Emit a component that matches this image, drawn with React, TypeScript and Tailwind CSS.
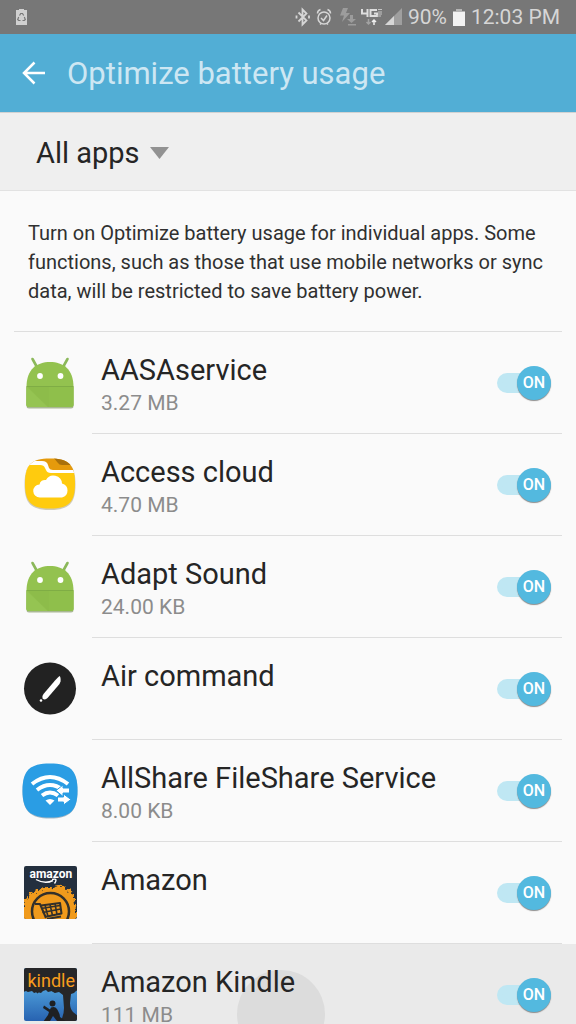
import React, { useState } from 'react'

interface AppEntry {
  id: string
  name: string
  size?: string
  icon: React.ReactNode
  pressed?: boolean
}

function AndroidIcon() {
  return (
    <svg viewBox="0 0 56 56" className="w-14 h-14" aria-hidden="true">
      <path d="M4.500 32h47v19q0 2.500-2.500 2.500H7q-2.500 0-2.500-2.500z" fill="#a9b894" />
      <path d="M10.500 4l5 9M45.500 4l-5 9" stroke="#8bb85a" strokeWidth="2.600" strokeLinecap="round" />
      <path d="M4.500 32C4.500 14 15 7 28 7S51.500 14 51.500 32v17.500q0 2.500-2.500 2.500H7q-2.500 0-2.500-2.500z" fill="#93c24f" />
      <path d="M4.500 32h47v17.500q0 2.500-2.500 2.500H7q-2.500 0-2.500-2.500z" fill="#8fbf4b" />
      <path d="M5 32h1l20 20H7q-2.500 0-2.500-2.500z" fill="#95c452" />
      <path d="M5 32h22v20h-1z" fill="#8bba49" opacity=".5" />
      <path d="M4.500 31.500h47" stroke="#7fad45" strokeWidth="1" />
      <circle cx="18" cy="21" r="2.900" fill="#fff" />
      <circle cx="38.500" cy="21" r="2.900" fill="#fff" />
    </svg>
  )
}

function CloudIcon() {
  return (
    <svg viewBox="0 0 56 56" className="w-14 h-14" aria-hidden="true">
      <defs>
        <clipPath id="folderShape">
          <path d="M28 1.500C47 1.500 53 8 53 26.500S47 51.500 28 51.500 3 45 3 26.500 9 1.500 28 1.500z" />
        </clipPath>
      </defs>
      <path d="M28 2C47.500 2 53.500 9 53.500 27.500S47.500 53 28 53 2.500 46 2.500 27.500 8.500 2 28 2z" fill="#cfcab8" />
      <g clipPath="url(#folderShape)">
        <path d="M0 0h56v16H0z" fill="#e59a0c" />
        <path d="M31 0h25v8H40q-3 0-4-2z" fill="#a9700b" />
        <path d="M0 4h20q5 0 6 4l1 3q1 2 4 2h25v5H0z" fill="#fff" />
        <path d="M0 8h18q4 0 5 3l1 2q1 3 5 3h27v40H0z" fill="#ffcb0e" />
      </g>
      <path d="M18 40.500a6.500 6.500 0 0 1-.5-13 5.500 5.500 0 0 1 6.500-4.500 8.500 8.500 0 0 1 16 3.500A7.200 7.200 0 0 1 40 40.500z" fill="#fff" />
    </svg>
  )
}

function PenIcon() {
  return (
    <svg viewBox="0 0 56 56" className="w-14 h-14" aria-hidden="true">
      <circle cx="28" cy="27.500" r="26" fill="#222" />
      <path d="M20.500 37.500q-1-2 1-4.500L33 19.500q3-3.500 4.500-4.500 1.500 1 1 5.500L37.500 23 25.500 37q-2.500 2.500-5 .5z" fill="#fff" />
      <circle cx="19" cy="39.500" r="1.300" fill="#fff" />
    </svg>
  )
}

function ShareIcon() {
  return (
    <svg viewBox="0 0 56 56" className="w-14 h-14" aria-hidden="true">
      <path d="M28 1C48 1 55.500 8 55.500 28S48 55.500 28 55.500 .5 48 .5 28 8 1 28 1z" fill="#a5b6c2" />
      <path d="M28 .5C48 .5 55.500 7 55.500 27.500S48 54.500 28 54.500 .5 48 .5 27.500 8 .5 28 .5z" fill="#2a9de4" />
      <g fill="none" stroke="#fff" strokeWidth="4">
        <path d="M10 21q18-14 36 0" />
        <path d="M15 27q13-10 26 0" />
        <path d="M20 32.500q8-6 16 0" />
      </g>
      <path d="M28 42l-4.500-4.500q4.500-3 9 0z" fill="#fff" />
      <path d="M34 27.500l7-5.500v3h6.500v5H41v3.500zM49 36.500L41.500 31v3H35.500v5h6v3z" fill="#fff" stroke="#2a9de4" strokeWidth="1" />
    </svg>
  )
}

function AmazonIcon() {
  return (
    <svg viewBox="0 0 56 56" className="w-14 h-14" aria-hidden="true">
      <defs>
        <clipPath id="amazonTile">
          <rect x="2" y="1" width="53" height="53" rx="2" />
        </clipPath>
        <filter id="paintEdge" x="-20%" y="-20%" width="140%" height="140%">
          <feTurbulence type="fractalNoise" baseFrequency="0.3" numOctaves="2" seed="4" />
          <feDisplacementMap in="SourceGraphic" scale="9" xChannelSelector="R" yChannelSelector="G" />
        </filter>
      </defs>
      <g clipPath="url(#amazonTile)">
        <path d="M0 0h56v56H0z" fill="#232f3e" />
        <path d="M-2 62V48q5-6 4-12 6-3 7-9 9 0 14-5 7 1 13-1 7-1 9 4 6 0 7 8 2 9 3 29z" fill="#f09a1c" filter="url(#paintEdge)" />
        <circle cx="28.500" cy="46.500" r="18.500" fill="none" stroke="#33302b" strokeWidth="2.500" />
        <path d="M13 39h5l6 14M19 40.500l19-2.500 1.500 10.500-17 3.500" fill="none" stroke="#33302b" strokeWidth="2" strokeLinejoin="round" />
        <path d="M19 43.500l19-3M20.500 47.500l18-3.500M23 40l3 11.500M28 39.500l2.500 11M33 38.500l2 11" stroke="#33302b" strokeWidth="1.600" />
        <path d="M25 54l14-2.500" stroke="#33302b" strokeWidth="2" />
      </g>
      <text x="7.500" y="13" fontSize="12" fontWeight="700" fontFamily="Roboto, sans-serif" fill="#fff">amazon</text>
      <path d="M14 14.500q9 5 17 1M30 14.500q4-1 4 .5t-1.500 3.500" fill="none" stroke="#fff" strokeWidth="1.400" />
    </svg>
  )
}

function KindleIcon() {
  return (
    <svg viewBox="0 0 56 56" className="w-14 h-14" aria-hidden="true">
      <defs>
        <linearGradient id="kindleSky" x1="0" y1="0" x2="0" y2="1">
          <stop offset="0.400" stopColor="#4c9bd8" />
          <stop offset="1" stopColor="#255fae" />
        </linearGradient>
        <clipPath id="kindleTile">
          <rect x="2" y="1" width="53" height="53" rx="2" />
        </clipPath>
      </defs>
      <g clipPath="url(#kindleTile)">
        <path d="M0 0h56v56H0z" fill="url(#kindleSky)" />
        <path d="M0 0h56v23l-2 1-2 2-3 1-1 9q0 6 3 9l5 4v6H38q4-6 4-14l-1-13-4-3-4 1-3-2-4 1-2-2-3 1-2 2-4-1-3 1-2-2-4 1-2-1-3 1z" fill="#262628" />
        <path d="M4 21l2 3M11 22l2 3M17 23l-2 3M28 22l5 3" stroke="#262628" strokeWidth="2" />
        <circle cx="30.500" cy="36.500" r="3" fill="#1e2023" />
        <path d="M21 55l5-7 1-3-6-4 1-2.500 6 4 1-2q4-1.500 6 1.500 3 5 3 8l7 5z" fill="#1e2023" />
        <path d="M28 54l3-5 4 5z" fill="#285fa9" />
      </g>
      <text x="5.500" y="20" fontSize="18" fontFamily="Roboto, sans-serif" fill="#f79c1d">kindle</text>
    </svg>
  )
}

const apps: AppEntry[] = [
  { id: 'aasa', name: 'AASAservice', size: '3.27 MB', icon: <AndroidIcon /> },
  { id: 'cloud', name: 'Access cloud', size: '4.70 MB', icon: <CloudIcon /> },
  { id: 'sound', name: 'Adapt Sound', size: '24.00 KB', icon: <AndroidIcon /> },
  { id: 'air', name: 'Air command', icon: <PenIcon /> },
  { id: 'allshare', name: 'AllShare FileShare Service', size: '8.00 KB', icon: <ShareIcon /> },
  { id: 'amazon', name: 'Amazon', icon: <AmazonIcon /> },
  { id: 'kindle', name: 'Amazon Kindle', size: '111 MB', icon: <KindleIcon />, pressed: true },
]

function StatusBar() {
  return (
    <div className="flex h-[34px] shrink-0 items-center justify-between bg-[#777] px-4 text-[#d6d6d6]">
      <svg viewBox="0 0 11 16" className="h-4 w-[11px]" aria-hidden="true">
        <path d="M0 1h3V0h5v1h3v15H0z" fill="#d0d0d0" />
        <path d="M3.500 6.500l1.200-2h1.800l1.200 2M8.300 8l1 2.500-1 1H6.500M4.500 11.500H2.700l-1-1 1-2.500" fill="none" stroke="#777" strokeWidth="1.200" />
      </svg>
      <div className="flex items-center gap-1.5">
        {/* bluetooth, alarm, sync, network, signal */}
        <svg viewBox="0 0 107 20" className="h-5 w-[107px]" aria-hidden="true">
          <g fill="none" stroke="#d6d6d6" strokeWidth="1.500">
            <path d="M3.500 5.500l8 8-4 4V2.500l4 4-8 8" strokeWidth="1.800" />
            <path d="M1.500 8.500v3M14 8.500v3" strokeWidth="1.800" />
            <circle cx="29" cy="11" r="6" />
            <path d="M26 11l2.500 2.500 3.500-5M22.500 6.500q0-3 3-4M35.500 6.500q0-3-3-4M25 17.500l1-1M33 17.500l-1-1" />
          </g>
          <path d="M48 1h5l-2 5h4l-8 9 2-6.500h-4zM55 8h3v4h3l-4.500 4-4.500-4h3zM53 17h8v1.500h-8z" fill="#9c9c9c" />
          <path d="M67 2v4.500h6M72.500 2v8M82 3h-6.500v6H82V6.500h-3" fill="none" stroke="#dedede" strokeWidth="2" />
          <path d="M83 2.500h4M83 5h4M83 7h4M82 9h4" stroke="#c5c5c5" strokeWidth="1" />
          <path d="M73.500 12v5M71.500 15l2 2 2-2" fill="none" stroke="#a2a2a2" strokeWidth="1.500" />
          <path d="M79 18v-5M77 15l2-2 2 2" fill="none" stroke="#eee" strokeWidth="1.500" />
          <path d="M90 18L107 1v17z" fill="#9f9f9f" />
          <path d="M90 18l9-9v9z" fill="#d6d6d6" />
        </svg>
        <span className="text-[21px] leading-6">90%</span>
        <svg viewBox="0 0 12 17" className="h-[17px] w-3" aria-hidden="true">
          <path d="M0 2h3V0h6v2h3v15H0z" fill="#f2f2f2" />
          <path d="M0 2h3V0h6v2h3v1H0z" fill="#b5b5b5" />
        </svg>
        <span className="text-[21px] leading-6">12:03 PM</span>
      </div>
    </div>
  )
}

interface AppRowProps {
  app: AppEntry
  on: boolean
  onToggle: (id: string) => void
}

function AppRow({ app, on, onToggle }: AppRowProps) {
  return (
    <li className={`relative flex h-[102px] pr-3.5 ${app.pressed ? 'bg-[#eaeaea]' : ''}`}>
      {/* touch ripple */}
      {app.pressed && (
        <div className="absolute inset-0 overflow-hidden">
          <div className="absolute left-[237px] top-[26px] size-[88px] rounded-full bg-[#dcdcdc]" />
        </div>
      )}
      <div className="relative flex w-[92px] shrink-0 items-center pl-[22px]">{app.icon}</div>
      <div className={`relative flex min-w-0 flex-1 border-b pl-[9px] pr-[11px] ${app.pressed ? 'border-transparent' : 'border-[#dedede]'}`}>
        <div className="min-w-0 flex-1 pt-5">
          <div id={`name-${app.id}`} className="truncate text-[29px] leading-9 text-[#252525]">{app.name}</div>
          {app.size && <div className="text-[21px] leading-[30px] text-[#8c8c8c]">{app.size}</div>}
        </div>
        <label className="relative flex w-[54px] shrink-0 cursor-pointer items-center self-center">
          <input
            type="checkbox"
            role="switch"
            className="sr-only"
            checked={on}
            onChange={() => onToggle(app.id)}
            aria-labelledby={`name-${app.id}`}
          />
          <span className={`flex h-5 w-full items-center rounded-full ${on ? 'justify-end bg-linear-to-r from-[#bfe7f3] from-70% to-transparent to-70%' : 'justify-start bg-[#d5d5d5]'}`}>
            <span className={`flex size-[34px] items-center justify-center rounded-full text-base font-medium text-white shadow-[0_1px_1px_#8b8b8b] ${on ? 'bg-[#53b9df]' : 'bg-[#a5a5a5]'}`}>
              {on ? 'ON' : ''}
            </span>
          </span>
        </label>
      </div>
    </li>
  )
}

export default function App() {
  const [off, setOff] = useState<string[]>([])

  const toggle = (id: string) => {
    setOff((prev) => (prev.includes(id) ? prev.filter((x) => x !== id) : [...prev, id]))
  }

  return (
    <div className="flex h-screen flex-col overflow-hidden bg-[#fafafa] font-['Roboto',sans-serif]">
      <StatusBar />
      <header className="flex h-[78px] shrink-0 items-center bg-[#52aed5] pl-[22px]">
        <button type="button" aria-label="Back" className="mr-[21px]">
          <svg viewBox="0 0 24 24" className="block size-6" fill="none" stroke="#fff" strokeWidth="2.500">
            <path d="M12.500 1.500L2 12l10.500 10.500M2 12h21" />
          </svg>
        </button>
        <h1 className="pt-0.5 text-[31px] font-normal leading-9 text-[#cde7f3]">Optimize battery usage</h1>
      </header>
      <div className="flex h-[79px] shrink-0 items-center border-b border-t border-b-[#e2e2e2] border-t-[#d2d2d2] bg-[#efefef] pl-9 pt-0.5">
        <button type="button" aria-haspopup="listbox" className="flex items-center gap-2.5 text-[29px] leading-9 text-[#252525]">
          All apps
          <svg viewBox="0 0 20 12" className="h-3 w-5" aria-hidden="true">
            <path d="M0 0h19L9.500 12z" fill="#929292" />
          </svg>
        </button>
      </div>
      <main className="min-h-0 flex-1 overflow-y-auto [scrollbar-width:none]">
        <div className="mx-3.5 border-b border-[#dedede] px-3.5 pb-[25px] pt-7">
          <p className="text-[20px] leading-[29px] text-[#303030]">
            Turn on Optimize battery usage for individual apps. Some functions, such as those that use mobile networks or sync data, will be restricted to save battery power.
          </p>
        </div>
        <ul>
          {apps.map((app) => (
            <AppRow key={app.id} app={app} on={!off.includes(app.id)} onToggle={toggle} />
          ))}
        </ul>
      </main>
    </div>
  )
}
